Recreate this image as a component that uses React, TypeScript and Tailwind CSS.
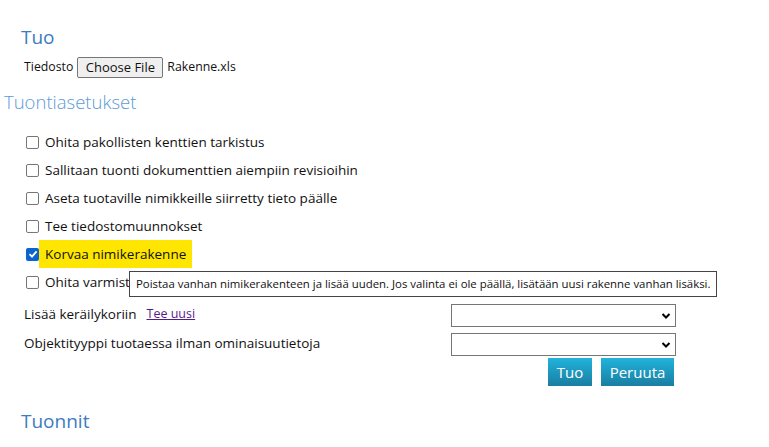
import React from "react";

const options = [
  { label: "Ohita pakollisten kenttien tarkistus", checked: false },
  { label: "Sallitaan tuonti dokumenttien aiempiin revisioihin", checked: false },
  { label: "Aseta tuotaville nimikkeille siirretty tieto päälle", checked: false },
  { label: "Tee tiedostomuunnokset", checked: false },
  { label: "Korvaa nimikerakenne", checked: true, highlight: true },
  { label: "Ohita varmistukset", checked: false, tooltip: true },
];

const Checkbox = ({ checked }: { checked: boolean }) =>
  checked ? (
    <span className="w-[13px] h-[13px] rounded-[2px] bg-[#0b63d0] flex items-center justify-center shrink-0">
      <svg width="10" height="10" viewBox="0 0 10 10">
        <path d="M1.5 5.2 L4 7.6 L8.6 2.4" stroke="white" strokeWidth="1.8" fill="none" />
      </svg>
    </span>
  ) : (
    <span className="w-[13px] h-[13px] rounded-[2px] border border-[#767676] bg-white shrink-0" />
  );

const Select = () => (
  <div className="w-[225px] h-[23px] border border-[#767676] bg-white flex items-center justify-end pr-[4px]">
    <svg width="10" height="8" viewBox="0 0 10 8">
      <path d="M1.5 2 L5 5.5 L8.5 2" stroke="black" strokeWidth="2" fill="none" />
    </svg>
  </div>
);

export default function App() {
  return (
    <div
      className="w-[769px] h-[447px] bg-white text-[#111] overflow-hidden"
      style={{ fontFamily: '"Segoe UI", "Open Sans", sans-serif' }}
    >
      {/* Tuo */}
      <h2 className="pl-[21px] pt-[23px] text-[19px] leading-[28px] text-[#3c7cc2]">Tuo</h2>
      <div className="pl-[24px] mt-[6px] flex items-center gap-[4px] text-[12.3px]">
        <span>Tiedosto</span>
        <button className="h-[21px] w-[86px] text-[13px] leading-none bg-[#efefef] border border-[#767676] rounded-[2px]">
          Choose File
        </button>
        <span>Rakenne.xls</span>
      </div>

      {/* Tuontiasetukset */}
      <h2 className="pl-[4px] mt-[10px] text-[18.5px] font-light leading-[28px] text-[#5b9bd5]">
        Tuontiasetukset
      </h2>

      <div className="pl-[26px] mt-[12px] flex flex-col text-[13.5px]">
        {options.map((o) => (
          <div key={o.label} className="relative h-[28px] flex items-center">
            <Checkbox checked={o.checked} />
            <span
              className={
                o.highlight
                  ? "h-[28px] flex items-center px-[6px] bg-[#ffe600]"
                  : o.tooltip
                  ? "ml-[6px] w-[84px] overflow-hidden whitespace-nowrap"
                  : "ml-[6px]"
              }
            >
              {o.label}
            </span>
            {o.tooltip && (
              <div className="absolute left-[103px] top-[3px] h-[26px] px-[6px] flex items-center bg-white border border-[#444] text-[11.4px] whitespace-nowrap">
                Poistaa vanhan nimikerakenteen ja lisää uuden. Jos valinta ei ole päällä, lisätään uusi rakenne vanhan lisäksi.
              </div>
            )}
          </div>
        ))}
      </div>

      {/* Lisäasetukset */}
      <div className="pl-[24px] mt-[8px] grid grid-cols-[427px_225px] gap-y-[6px] text-[13.5px]">
        <div className="flex items-start gap-[10px]">
          <span>Lisää keräilykoriin</span>
          <a className="text-[#551a8b] underline text-[12.5px] leading-[20px]" href="#">
            Tee uusi
          </a>
        </div>
        <Select />
        <div>Objektityyppi tuotaessa ilman ominaisuutietoja</div>
        <Select />
        <div />
        <div className="flex justify-end gap-[9px] pr-[2px] -mt-[4px]">
          <button className="h-[28px] w-[44px] text-white text-[15px] bg-gradient-to-b from-[#20b3dc] to-[#1a7ea1]">
            Tuo
          </button>
          <button className="h-[28px] w-[73px] text-white text-[15px] bg-gradient-to-b from-[#20b3dc] to-[#1a7ea1]">
            Peruuta
          </button>
        </div>
      </div>

      <h2 className="pl-[21px] mt-[21px] text-[19px] leading-[28px] text-[#3c7cc2]">Tuonnit</h2>
    </div>
  );
}
